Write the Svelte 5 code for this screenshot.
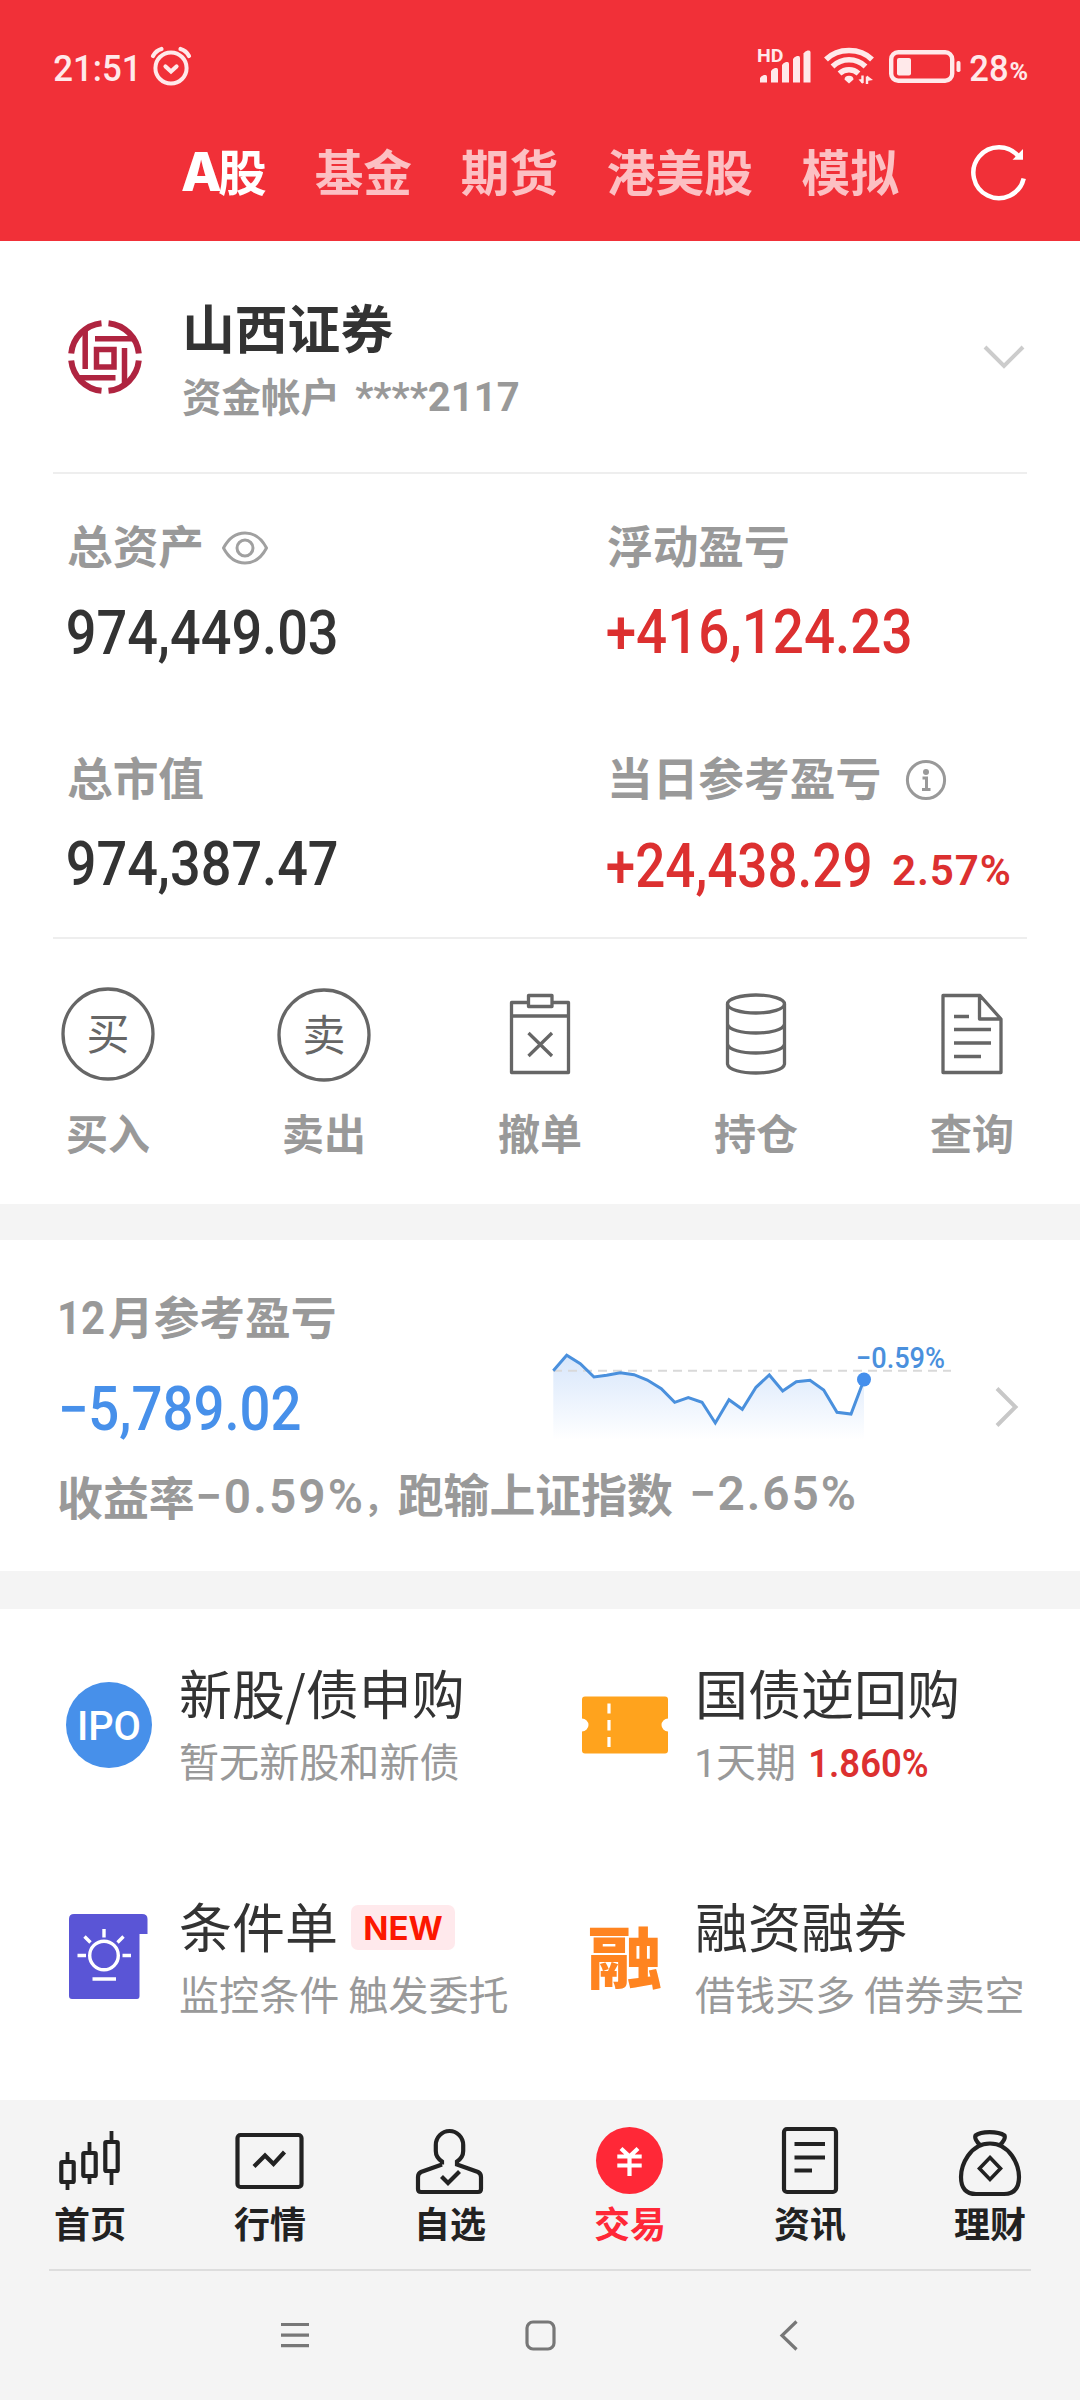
<script>
  const tabs = ['基金', '期货', '港美股', '模拟'];
  const returns = [
    [13.3, 40.7], [26.7, 25.3], [40.3, 33.7], [54, 47], [66.7, 45.3], [80.3, 42.7], [94, 44.7], [107.3, 50],
    [121.3, 58.7], [134.7, 72.3], [148.3, 67.7], [162, 72.3], [175.3, 93], [189, 69.7], [202.3, 79.3],
    [216, 57.3], [229.3, 45], [242.7, 61], [256.3, 51.7], [270, 50.3], [283.7, 60], [297, 82.3], [311, 84], [324, 49.7]
  ];
  const line = returns.map((p) => p.join(',')).join(' ');
  const area = `13.3,110 ${line} 324,110`;
  const signal = [[0, 7.5], [11, 14.5], [22, 20.5], [33, 26.5], [43.5, 32]];
  const candles = [[17.5, 32, 70, 42, 62], [39.5, 22, 64, 33, 56], [61.5, 11, 65, 22, 51]];
</script>

<!-- Numeral run whose box spans exactly the cap height; squeeze narrows the glyphs, 1 keeps them natural -->
{#snippet num(text, width, cap, weight = 500, squeeze = 0.86)}
  <svg class="num" {width} height={cap}>
    <text
      transform={`translate(${-cap * 0.03} ${cap}) scale(${squeeze} 1)`}
      font-size={cap / 0.711}
      font-weight={weight}
      textLength={(width + cap * 0.09) / squeeze}
      lengthAdjust={squeeze === 1 ? 'spacing' : 'spacingAndGlyphs'}>{text}</text>
  </svg>
{/snippet}

<div class="screen">
  <header>
    <div class="status">
      {@render num('21:51', 86, 26, 500)}
      <svg class="alarm" width="42" height="42" viewBox="0 0 42 42" fill="none" stroke="#ffe9ea" stroke-width="4" stroke-linecap="round">
        <circle cx="21" cy="23" r="15.600" />
        <path d="M3 11 Q6 5.500 11.500 4M39 11Q36 5.500 30.500 4" stroke-width="4.200" />
        <path d="M15.500 21.500 21 26.500 26.500 21.500" stroke-width="4.200" />
      </svg>
      <div class="spacer"></div>
      <svg width="60" height="40" viewBox="0 0 60 40" fill="#ffe9ea">
        <text x="-3" y="18" font-size="18" font-weight="700" textLength="26.500" lengthAdjust="spacingAndGlyphs">HD</text>
        {#each signal as [x, h]}
          <path d={`M${x} ${38.5} v${-h + 3} q1 -2 4 -3 h1.500 q1.500 0 1.500 2 v${h - 2} z`} />
        {/each}
      </svg>
      <svg class="wifi" width="50" height="40" viewBox="0 0 50 40" fill="none" stroke="#ffe9ea" stroke-width="5.500">
        <path d="M2 15.500C14 3.500 36 3.500 48 15.500M8.500 22.500C18 13.500 32 13.500 41.500 22.500M15.500 29.500C21 24.500 29 24.500 34.500 29.500" />
        <path d="M25 39.500 20.500 35.500Q20.500 32 25 31.800 29.500 32 29.500 35.500Z" fill="#ffe9ea" stroke="none" />
        <path d="M38.500 31.500V39M43 40V32.500" stroke-width="2.400" />
        <path d="M34.500 35.500 38.500 40V35ZM43 31.500V37L49 36Z" fill="#ffe9ea" stroke="none" />
      </svg>
      <svg class="battery" width="74" height="36" viewBox="0 0 74 36" fill="none" stroke="#ffe9ea">
        <rect x="2.200" y="2.200" width="61" height="28.500" rx="7" stroke-width="4.400" />
        <rect x="8" y="8" width="14" height="17.500" rx="2" fill="#ffe9ea" stroke="none" />
        <rect x="67.500" y="11" width="4" height="11" rx="1.700" fill="#ffe9ea" stroke="none" />
      </svg>
      {@render num('28', 37, 26, 500)}
      <span class="pct">{@render num('%', 17, 18, 700)}</span>
    </div>
    <nav class="markets">
      <span class="on"><b>A</b>股</span>
      {#each tabs as tab}<span>{tab}</span>{/each}
      <svg class="refresh" width="60" height="60" viewBox="0 0 60 60" fill="none">
        <path d="M54.700 36.500A25.500 25.500 0 1 1 50 15" stroke="#fff" stroke-width="4.500" />
        <path d="M43.500 17.800H54V7Z" fill="#fff" />
      </svg>
    </nav>
  </header>

  <section class="account">
    <div class="broker">
      <svg width="80" height="80" viewBox="0 0 80 80" fill="none" stroke="#af2440">
        <path stroke-width="6" d="M36.500 6.200A34 34 0 0 0 6.200 36.500M43.500 6.200A34 34 0 0 1 73.800 36.500M36.500 73.800A34 34 0 0 1 6.200 43.500M43.500 73.800A34 34 0 0 0 73.800 43.500" />
        <path stroke-width="5.500" d="M20.200 13V52M30 21.700H68M59.500 31V68M50.500 60.700H12" />
        <rect x="31.500" y="32.500" width="17.500" height="17.500" stroke-width="5.500" />
      </svg>
      <div class="who">
        <h1>山西证券</h1>
        <div class="acct"><span>资金帐户</span>{@render num('****2117', 162, 29, 700)}</div>
      </div>
      <svg class="down" width="44" height="30" viewBox="0 0 44 30" fill="none" stroke="#ccc" stroke-width="4"><path d="M4 5 23 24 42 5" /></svg>
    </div>
    <hr />
    <div class="metrics">
      <div>
        <div class="label">总资产
          <svg class="eye" width="50" height="40" viewBox="0 0 50 40" fill="none" stroke="#a0a0a0" stroke-width="3">
            <path d="M3.500 20C14 0 36 0 46.500 20 36 40 14 40 3.500 20Z" stroke-linejoin="round" /><circle cx="25" cy="20" r="8" />
          </svg>
        </div>
        {@render num('974,449.03', 269, 43)}
      </div>
      <div class="up">
        <div class="label">浮动盈亏</div>
        {@render num('+416,124.23', 303, 43)}
      </div>
      <div>
        <div class="label">总市值</div>
        {@render num('974,387.47', 269, 43)}
      </div>
      <div class="up">
        <div class="label">当日参考盈亏
          <svg class="info" width="42" height="42" viewBox="0 0 42 42" fill="none" stroke="#999" stroke-width="3">
            <circle cx="21" cy="21" r="18.600" /><circle cx="21" cy="13" r="3" fill="#999" stroke="none" />
            <path d="M17.500 19H21.500V30M17 30.500H25.500" />
          </svg>
        </div>
        <div class="pair">{@render num('+24,438.29', 263, 43)}{@render num('2.57%', 116, 30, 600, 1)}</div>
      </div>
    </div>
    <hr />
    <div class="actions">
      <div>
        <svg width="96" height="96" viewBox="0 0 96 96"><circle cx="48" cy="48" r="45" /><text class="glyph" x="48" y="63.500">买</text></svg>
        <span>买入</span>
      </div>
      <div>
        <svg width="96" height="96" viewBox="0 0 96 96"><circle cx="48" cy="49" r="45" /><text class="glyph" x="48" y="64.500">卖</text></svg>
        <span>卖出</span>
      </div>
      <div>
        <svg width="96" height="96" viewBox="0 0 96 96"><path d="M36.500 16.500H19.500V86.500H76.500V16.500H60M19.500 30H76.500M36.500 9.500H60V20.500H36.500ZM36.500 47 60 70M60 47 36.500 70" /></svg>
        <span>撤单</span>
      </div>
      <div>
        <svg width="96" height="96" viewBox="0 0 96 96"><ellipse cx="48" cy="18" rx="28.500" ry="9" /><path d="M19.500 18V78C21 90 75 90 76.500 78V18M19.500 38C21 50 75 50 76.500 38M19.500 58C21 70 75 70 76.500 58" /></svg>
        <span>持仓</span>
      </div>
      <div>
        <svg width="96" height="96" viewBox="0 0 96 96"><path d="M19 9.500H56L77 33V86.500H19ZM55.500 9.500V33H77M30 30.500H45M30 43.500H67M30 57H67M30 70.500H57" /></svg>
        <span>查询</span>
      </div>
    </div>
  </section>

  <section class="month">
    <div class="overview">
      <div class="sum">
        <div class="label">{@render num('12', 45, 33, 700)}<span>月参考盈亏</span></div>
        <div class="loss">{@render num('−5,789.02', 240, 43)}</div>
      </div>
      <svg class="trend" width="420" height="120" viewBox="0 0 420 120">
        <defs><linearGradient id="fade" x1="0" y1="0" x2="0" y2="1"><stop offset="0" stop-color="#d7e6fb" /><stop offset="1" stop-color="#fff" /></linearGradient></defs>
        <polygon points={area} fill="url(#fade)" />
        <path d="M13 40.700H411" stroke="#d9d9d9" stroke-width="2" stroke-dasharray="9 6" />
        <polyline points={line} fill="none" stroke="#4a90dd" stroke-width="3" />
        <circle cx="324" cy="49.500" r="7" fill="#458fec" />
        <text x="316" y="38" font-size="29" font-weight="500" fill="#4a90dd" textLength="89" lengthAdjust="spacingAndGlyphs">−0.59%</text>
      </svg>
      <svg class="next" width="34" height="44" viewBox="0 0 34 44" fill="none" stroke="#c8c8c8" stroke-width="4"><path d="M8 3.500 26.500 22 8 40.500" /></svg>
    </div>
    <div class="summary">
      <span>收益率</span>{@render num('−0.59%', 165, 34, 600, 1)}<span class="comma">，</span>
      <span class="raised">跑输上证指数{@render num('−2.65%', 164, 34, 600, 1)}</span>
    </div>
  </section>

  <section class="services">
    <div class="service">
      <svg width="90" height="90" viewBox="0 0 90 90">
        <circle cx="45" cy="45" r="43" fill="#4790ea" />
        <text x="13" y="59.500" font-size="40.500" font-weight="500" fill="#fff" textLength="64" lengthAdjust="spacingAndGlyphs">IPO</text>
      </svg>
      <div><h2>新股/债申购</h2><p>暂无新股和新债</p></div>
    </div>
    <div class="service">
      <svg width="90" height="90" viewBox="0 0 90 90">
        <path d="M5 16.500H85Q88 16.500 88 19.500V38.500A6.500 6.500 0 0 0 88 51.500V70.500Q88 73.500 85 73.500H5Q2 73.500 2 70.500V51.500A6.500 6.500 0 0 0 2 38.500V19.500Q2 16.500 5 16.500Z" fill="#ffa31d" />
        <path d="M29 23.500V33.500M29 40V50.500M29 57V67" stroke="#fff" stroke-width="3.200" />
      </svg>
      <div><h2>国债逆回购</h2><p class="repo">{@render num('1', 21, 28, 400, 1)}<span>天期</span><span class="rate">{@render num('1.860%', 118, 28, 600)}</span></p></div>
    </div>
    <div class="service">
      <svg width="90" height="90" viewBox="0 0 90 90" fill="none" stroke="#fff" stroke-width="3.400">
        <path d="M10 1H78Q83.500 1 83.500 6V21H75.500V83Q75.500 86 73 86H8Q5 86 5 83V6Q5 1 10 1Z" fill="#5a55d6" stroke="none" />
        <circle cx="40" cy="42.500" r="14.300" />
        <path d="M40 16V24.500M20.500 23.500 26.500 29.500M59.500 23.500 53.500 29.500M13.500 42.500H22M58.500 42.500H67M28.500 66H52" />
      </svg>
      <div><h2>条件单<em>NEW</em></h2><p>监控条件 触发委托</p></div>
    </div>
    <div class="service">
      <svg width="90" height="90" viewBox="0 0 90 90">
        <text class="margin" transform="translate(45 69.500) scale(1 .9)" font-size="75">融</text>
      </svg>
      <div><h2>融资融券</h2><p>借钱买多 借券卖空</p></div>
    </div>
  </section>

  <footer>
    <div class="dock">
      <div>
        <svg width="80" height="80" viewBox="0 0 80 80">
          {#each candles as [x, top, bottom, y1, y2]}
            <path d={`M${x} ${top}V${y1}M${x} ${y2}V${bottom}`} stroke-width="3.800" />
            <rect x={x - 6.2} y={y1} width="12.400" height={y2 - y1} rx="1" />
          {/each}
        </svg>首页
      </div>
      <div><svg width="80" height="80" viewBox="0 0 80 80"><rect x="7.500" y="15" width="64" height="52" rx="3" /><path d="M24 46.500 35 35.500 43.500 44 54.500 32" /></svg>行情</div>
      <div><svg width="80" height="80" viewBox="0 0 80 80"><path d="M32 44.500V41.500C27.500 38.500 25.800 35 25.800 31V25A13.700 14 0 0 1 53.200 25V31C53.200 35 51.500 38.500 47 41.500V44.500L68 52Q71 53.500 71 57V69Q71 72 68 72H11Q8 72 8 69V57Q8 53.500 11 52L32 44.500" /><path d="M31.500 56.500 38 63 49.500 51.500" /></svg>自选</div>
      <div class="current"><svg width="80" height="80" viewBox="0 0 80 80"><circle cx="39.500" cy="40.500" r="33.500" fill="#ff2837" stroke="none" /><path d="M31 28.500 39.500 36.500 48 28.500M27.300 36.500H51.700M27.300 45.500H51.700M39.500 36.500V56" stroke="#fff" /></svg>交易</div>
      <div><svg width="80" height="80" viewBox="0 0 80 80"><rect x="14" y="9" width="52" height="63" rx="3" /><path d="M24.500 24H55M24.500 37.500H55M24.500 50.500H42" /></svg>资讯</div>
      <div><svg width="80" height="80" viewBox="0 0 80 80"><path d="M30 25Q24 19 25.500 15.500C31 11 48 11 54.500 15.500Q56 19 50 25M40 23.500C60 23.500 69 45 69 57Q69 74 54 74H26Q11 74 11 57C11 45 20 23.500 40 23.500Z" /><path d="M40 37.500 50.500 48.500 40 59.500 29.500 48.500Z" stroke-width="3.600" /></svg>理财</div>
    </div>
    <div class="system">
      <svg width="36" height="36" viewBox="0 0 36 36"><path d="M4 6.500H32M4 17.200H32M4 27.700H32" /></svg>
      <svg width="36" height="36" viewBox="0 0 36 36"><rect x="5" y="4" width="27" height="27" rx="6" /></svg>
      <svg width="36" height="36" viewBox="0 0 36 36"><path d="M29.500 3.500 15 17.500 29.500 31.500" /></svg>
    </div>
  </footer>
</div>

<style>
  :global(body) { background: #fff; }
  .screen {
    width: 1080px; height: 2400px; overflow: hidden; background: #fff; color: #333;
    display: flex; flex-direction: column; font-family: "Noto Sans CJK SC", sans-serif;
  }
  .screen * { box-sizing: border-box; }
  svg { display: block; flex: none; overflow: visible; }
  svg text { font-family: Roboto, "Noto Sans CJK SC", sans-serif; }
  .num { fill: currentColor; }
  h1, h2, p { margin: 0; }
  hr { border: 0; height: 2px; margin: 0 53px; background: #eee; }

  header { height: 241px; background: #f13038; color: #ffe9ea; }
  .status { height: 100px; padding: 44px 53px 0 54px; display: flex; align-items: flex-start; }
  .status > .num { margin-top: 11px; }
  .alarm { margin: 1px 0 0 10px; }
  .spacer { flex: 1; }
  .wifi { margin-left: 4px; }
  .battery { margin: 6px 7px 0 15px; }
  .pct { margin: 18px 0 0 3px; }
  .markets {
    display: flex; gap: 48.7px; height: 141px; padding: 46px 0 0 181px; color: #fcc0c3;
    font-size: 48.7px; line-height: 49px; font-weight: 700; white-space: nowrap;
  }
  .markets .on { color: #fff; width: 85px; display: flex; }
  .markets b { font: 800 53px/53px Inter, sans-serif; width: 37px; letter-spacing: -2px; }
  .refresh { margin: -4.5px 0 0 21px; }

  .account { height: 963px; }
  .broker { height: 231px; padding: 0 55px 0 65px; display: flex; align-items: center; }
  .who { margin-left: 37px; flex: 1; display: grid; gap: 23px; padding-top: 1px; }
  h1 { font-size: 52.8px; line-height: 52px; font-weight: 700; }
  .acct { display: flex; gap: 16px; font-size: 39.5px; line-height: 39px; font-weight: 700; color: #999; }
  .acct :global(.num) { margin-top: 7px; }
  .metrics { display: grid; grid-template-columns: 540px 1fr; padding-left: 67px; height: 463px; grid-template-rows: 232px 231px; }
  .metrics > div { padding-top: 47px; }
  .label { display: flex; font-size: 45.7px; line-height: 46px; font-weight: 700; color: #999; margin-bottom: 43px; }
  .eye { margin: 7px 0 0 16px; }
  .info { margin: 6px 0 0 24px; }
  .up { color: #dc3030; }
  .pair { display: flex; gap: 23px; }
  .pair :global(.num:last-child) { margin-top: 11px; }
  .actions { display: grid; grid-template-columns: repeat(5, 216px); padding-top: 47px; }
  .actions div { display: grid; justify-items: center; gap: 29px; }
  .actions svg { fill: none; stroke: #666; stroke-width: 3.3; stroke-linejoin: round; }
  .actions span { font-size: 42px; line-height: 42px; font-weight: 700; color: #999; }
  .actions .glyph { font-size: 43px; fill: #666; stroke: none; text-anchor: middle; }

  .month { height: 405px; border: solid #f4f4f4; border-width: 36px 0 38px; }
  .overview { display: flex; height: 232px; }
  .sum { width: 540px; padding: 52px 0 0 60px; }
  .sum .label { margin: 0 0 49px -2px; }
  .sum .label span { margin-left: 5px; }
  .sum .label :global(.num) { margin-top: 9px; }
  .loss { color: #4790ea; margin-left: -1px; }
  .trend { margin-top: 90px; }
  .next { margin: 145px 0 0 29px; }
  .summary { display: flex; padding-left: 57px; font-size: 45.9px; line-height: 46px; font-weight: 700; color: #999; }
  .summary > :global(.num) { margin: 7px 0 0 1px; }
  .comma { font-size: 34px; line-height: 46px; padding: 3px 0 0 3px; }
  .raised { display: flex; gap: 17px; margin-top: -3px; }
  .raised :global(.num) { margin-top: 7px; }

  .services { height: 491px; display: grid; grid-template-columns: 516px 1fr; grid-template-rows: 233px 258px; padding-left: 64px; }
  .service { display: flex; gap: 25px; padding-top: 57px; white-space: nowrap; }
  .service > svg { margin-top: 14px; }
  h2 { display: flex; font-size: 53px; line-height: 53px; font-weight: 400; }
  p { margin-top: 21px; font-size: 40.1px; line-height: 40px; color: #999; }
  em {
    margin: 6px 0 0 13px; width: 104px; height: 45px; border-radius: 7px; background: #ffe9ec; color: #fc1700;
    font: 700 33px/46px Inter, sans-serif; text-align: center;
  }
  .repo { display: flex; }
  .repo :global(.num) { margin-top: 9px; }
  .repo > .rate { margin-left: 13px; color: #dc3030; }
  .margin { font-weight: 900; fill: #ff8420; text-anchor: middle; }

  footer { height: 300px; background: #f4f4f4; }
  .dock { height: 169px; display: grid; grid-template-columns: repeat(6, 180px); padding-top: 20px; }
  .dock > div { display: flex; flex-direction: column; align-items: center; gap: 4px; font-size: 36px; line-height: 36px; font-weight: 700; color: #222; }
  .dock svg { fill: none; stroke: #222; stroke-width: 4.2; }
  .dock .current { color: #ff2837; }
  .system { margin: 0 49px; height: 131px; border-top: 2px solid #ddd; display: flex; padding: 47px 0 0 228px; gap: 209px; }
  .system svg { fill: none; stroke: #777; stroke-width: 3.2; }
</style>
